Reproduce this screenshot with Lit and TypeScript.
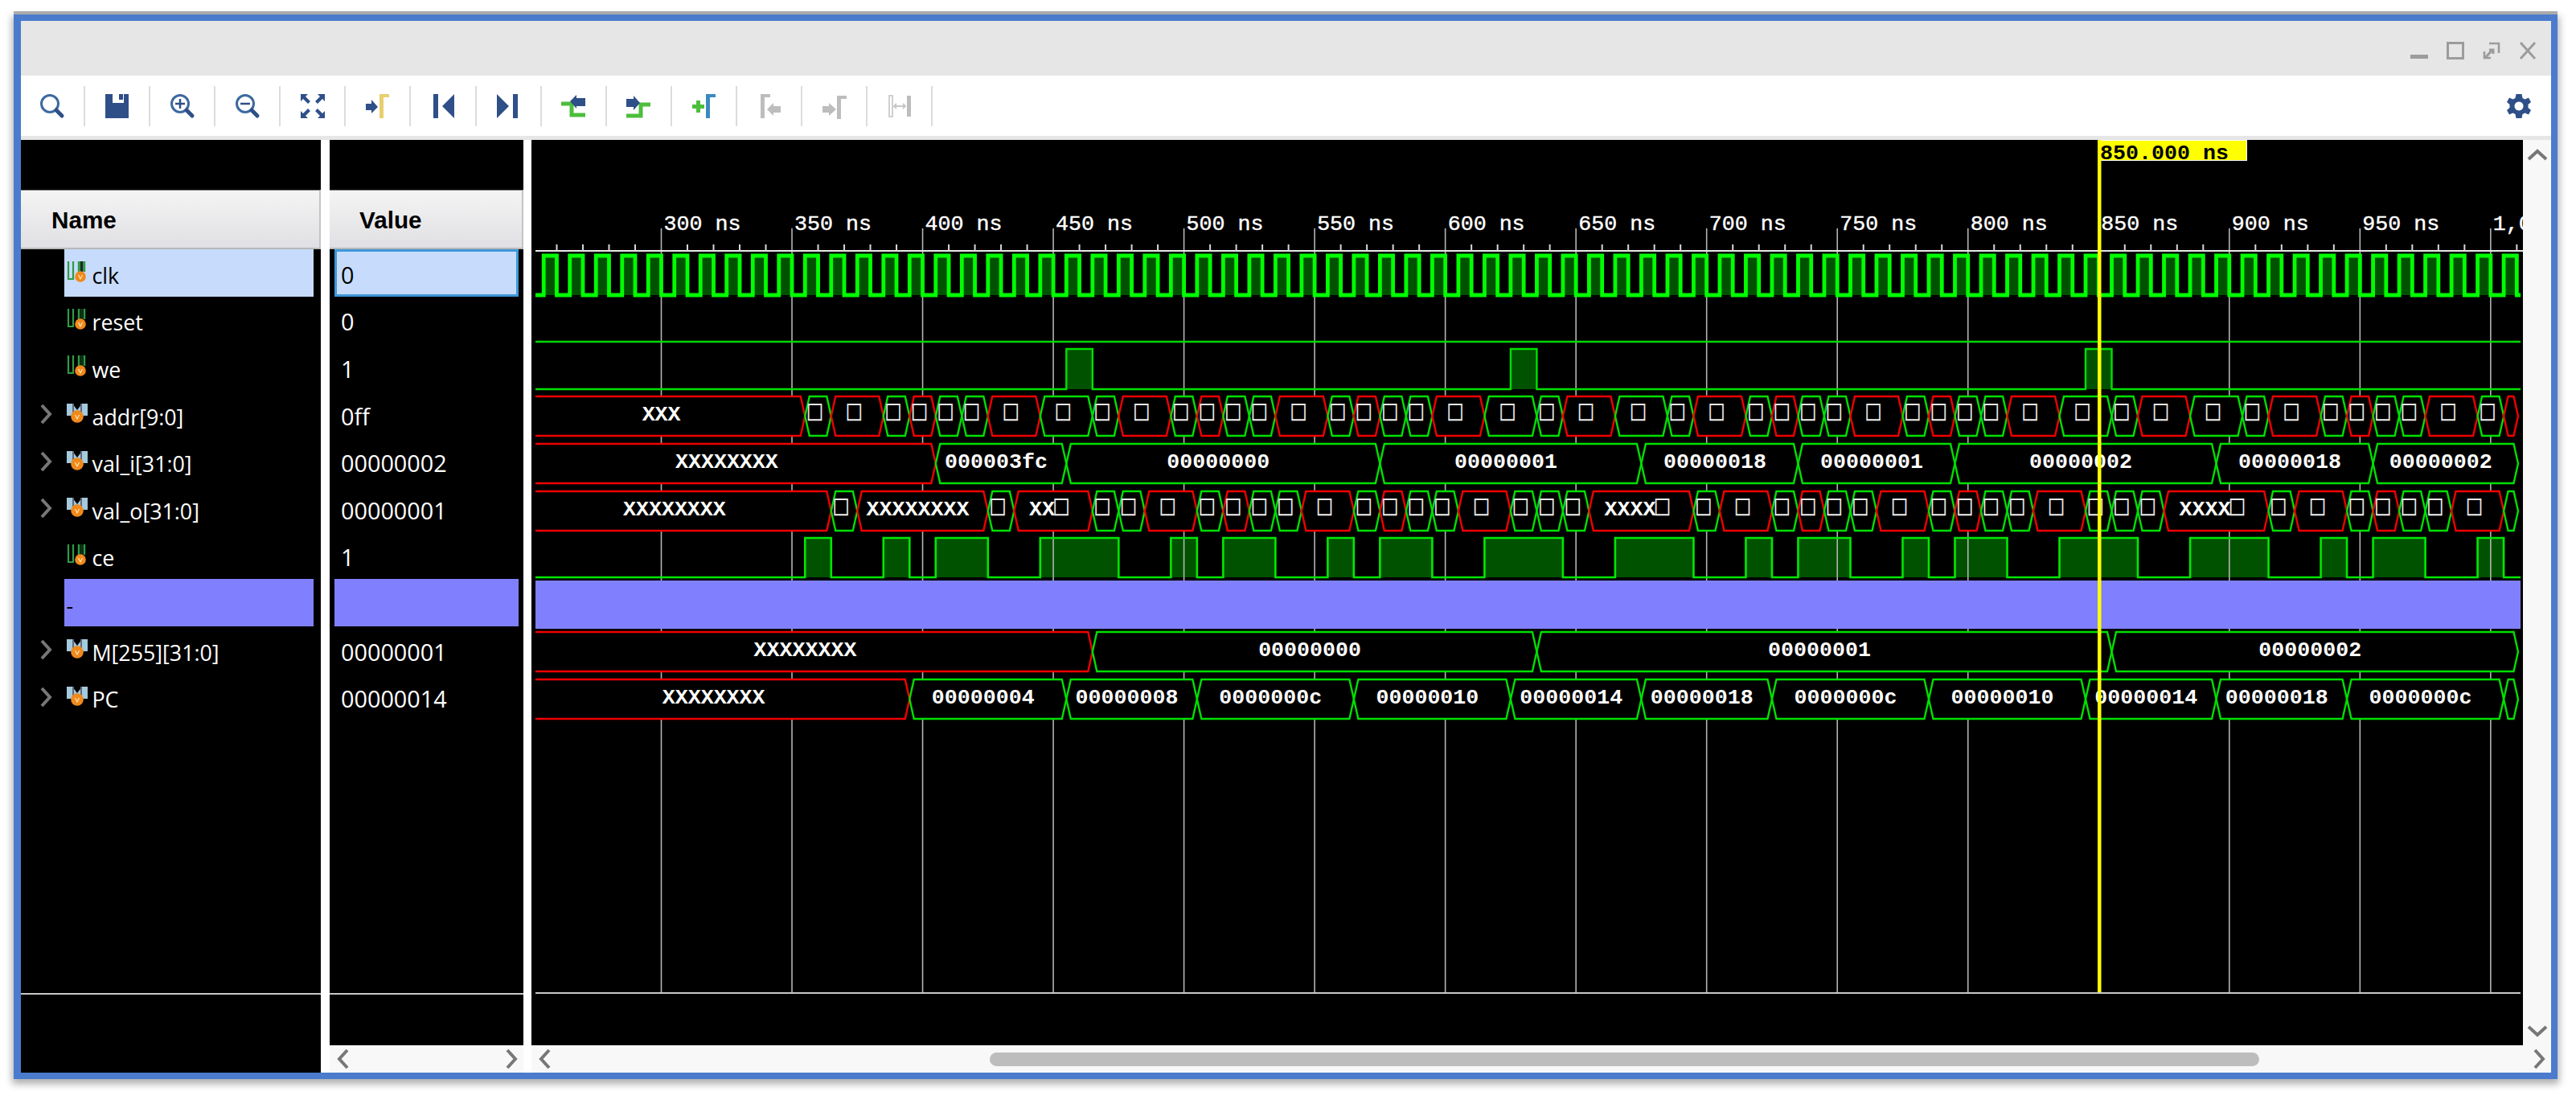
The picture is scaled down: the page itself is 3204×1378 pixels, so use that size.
import { LitElement, html, css, svg } from 'lit';
import { customElement } from 'lit/decorators.js';

const NAVY = '#2f4f88';
const GREY = '#bdbdbd';
const PX_NS = 3.2505;
const X0 = 666;
const XEND = 3132;
const TOFU = '\u25A1';
const CHAR_W = 16;

const tx = (ns: number) => 822.5 + (ns - 300) * PX_NS;

interface Seg { t: number; bad: boolean; label: string }

// "355g" = green segment from 355ns, "375r:XXXXXXXX" = red one with a label
const parse = (s: string): Seg[] =>
  s.split(' ').map((tok) => {
    const [head, label] = tok.split(':');
    return {
      t: parseInt(head),
      bad: head.endsWith('r'),
      label: label === undefined ? TOFU : label.replace(/#/g, TOFU),
    };
  });

const ADDR = parse('250r:XXX 355g 365r 385g 395r 405g 415g 425r 445g 465g 475r 495g 505r 515g 525g 535r 555g 565r 575g 585g 595r 615g 635g 645r 665g 685g 695r 715g 725r 735g 745g 755r 775g 785r 795g 805g 815r 835g 855g 865r 885g 905g 915r 935g 945r 955g 965g 975r 995g 1005r:');
const VAL_I = parse('250r:XXXXXXXX 405g:000003fc 455g:00000000 575g:00000001 675g:00000018 735g:00000001 795g:00000002 895g:00000018 955g:00000002');
const VAL_O = parse('250r:XXXXXXXX 365g 375r:XXXXXXXX 425g 435r:XX# 465g 475g 485r 505g 515r 525g 535g 545r 565g 575r 585g 595g 605r 625g 635g 645g 655r:XXXX# 695g 705r 725g 735r 745g 755g 765r 785g 795r 805g 815g 825r 845g 855g 865g 875r:XXXX# 915g 925r 945g 955r 965g 975g 985r 1005g:');
const MEM = parse('250r:XXXXXXXX 465g:00000000 635g:00000001 855g:00000002');
const PC = parse('250r:XXXXXXXX 395g:00000004 455g:00000008 505g:0000000c 565g:00000010 625g:00000014 675g:00000018 725g:0000000c 785g:00000010 845g:00000014 895g:00000018 945g:0000000c 1005g:');

const WE: [number, number][] = [[455, 465], [625, 635], [845, 855]];
const CE: [number, number][] = [
  [355, 365], [385, 395], [405, 425], [445, 475], [495, 505], [515, 535], [555, 565], [575, 595],
  [615, 645], [665, 695], [715, 725], [735, 755], [775, 785], [795, 815], [835, 865], [885, 915],
  [935, 945], [955, 975], [995, 1005],
];
const CLK: [number, number][] = Array.from({ length: 76 }, (_, i) => [255 + i * 10, 260 + i * 10] as [number, number]);

const ROWS = [
  { name: 'clk', value: '0', bus: false, selected: true },
  { name: 'reset', value: '0', bus: false },
  { name: 'we', value: '1', bus: false },
  { name: 'addr[9:0]', value: '0ff', bus: true },
  { name: 'val_i[31:0]', value: '00000002', bus: true },
  { name: 'val_o[31:0]', value: '00000001', bus: true },
  { name: 'ce', value: '1', bus: false },
  { name: '-', value: '', bus: false, divider: true },
  { name: 'M[255][31:0]', value: '00000001', bus: true },
  { name: 'PC', value: '00000014', bus: true },
];

const wrap = (body: unknown, w = 32, h = 32) =>
  html`<svg width=${w} height=${h} viewBox="0 0 ${w} ${h}">${body}</svg>`;

const lens = (extra: unknown = '') => svg`
  <circle cx="13" cy="13" r="10.5" fill="none" stroke="#3d6aa0" stroke-width="3"/>
  <path d="M21 21 L28 28" stroke=${NAVY} stroke-width="5" stroke-linecap="round"/>
  ${extra}`;

const marker = (x: number, y: number, c: string) =>
  svg`<path d="M${x} ${y + 30} V${y} H${x + 12} V${y + 4} H${x + 5} V${y + 30} Z" fill=${c}/>`;

const TOOLS = [
  lens(),
  svg`<path d="M1 1 H10 V12 H24 V1 H30 V31 H1 Z" fill=${NAVY}/><path d="M18 1 H23 V8 H18 Z" fill=${NAVY}/>`,
  lens(svg`<path d="M13 7 V19 M7 13 H19" stroke=${NAVY} stroke-width="2.5"/>`),
  lens(svg`<path d="M7 13 H19" stroke=${NAVY} stroke-width="2.5"/>`),
  svg`<g fill=${NAVY}>
    <path d="M1 1 H10 L7 4 L13 10 L10 13 L4 7 L1 10 Z"/>
    <path d="M31 1 H22 L25 4 L19 10 L22 13 L28 7 L31 10 Z"/>
    <path d="M1 31 H10 L7 28 L13 22 L10 19 L4 25 L1 22 Z"/>
    <path d="M31 31 H22 L25 28 L19 22 L22 19 L28 25 L31 22 Z"/></g>`,
  svg`<path d="M1 13 H8 V8 L16 17 L8 25 V21 H1 Z" fill=${NAVY}/>${marker(18, 1, '#e8cf6e')}`,
  svg`<path d="M4 1 H10 V31 H4 Z M30 1 V31 L15 16 Z" fill=${NAVY}/>`,
  svg`<path d="M28 1 H22 V31 H28 Z M2 1 V31 L17 16 Z" fill=${NAVY}/>`,
  svg`<path d="M1 13 H14 V27 H31" fill="none" stroke="#4dbe3c" stroke-width="5"/>
    <path d="M12 10 L20 2 V6 H31 V16 H20 V19 Z" fill=${NAVY}/>`,
  svg`<path d="M31 14 H19 V28 H1" fill="none" stroke="#4dbe3c" stroke-width="5"/>
    <path d="M18 12 L10 3 V7 H1 V17 H10 V21 Z" fill=${NAVY}/>`,
  svg`<path d="M7 9 H12 V14 H17 V19 H12 V24 H7 V19 H2 V14 H7 Z" fill="#4dbe3c"/>${marker(19, 1, '#3a8ac0')}`,
  svg`${marker(6, 1, GREY)}<path d="M14 20 L22 12 V16 H31 V24 H22 V28 Z" fill=${GREY}/>`,
  svg`<path d="M1 16 H9 V12 L18 20 L9 28 V24 H1 Z" fill=${GREY}/>${marker(19, 3, GREY)}`,
  svg`<rect x="3" y="3" width="4" height="26" fill="none" stroke="#d0d0d0" stroke-width="2"/>
    <rect x="25" y="3" width="5" height="26" fill=${GREY}/>
    <path d="M9 16 H23 M12 13 L9 16 L12 19 M20 13 L23 16 L20 19" fill="none" stroke="#c8c8c8" stroke-width="2"/>`,
];

const GEAR = svg`<path fill-rule="evenodd" fill=${NAVY} d="M12.5 1 H19.5 L20.5 6 L23.5 7.5 L28 5.5 L31 11 L27.5 14 V18 L31 21 L28 26.5 L23.5 24.5 L20.5 26 L19.5 31 H12.5 L11.5 26 L8.5 24.5 L4 26.5 L1 21 L4.5 18 V14 L1 11 L4 5.5 L8.5 7.5 L11.5 6 Z M16 10.5 A5.5 5.5 0 1 0 16.01 10.5 Z"/>`;

const chevron = (d: 'l' | 'r') => html`<svg class="chev" width="16" height="26" viewBox="0 0 16 26">
  <path d=${d === 'l' ? 'M13 2 L3 13 L13 24' : 'M3 2 L13 13 L3 24'} fill="none" stroke="#777" stroke-width="4"/></svg>`;

const vChevron = (up: boolean) => html`<svg width="26" height="15" viewBox="0 0 26 15">
  <path d=${up ? 'M2 13 L13 3 L24 13' : 'M2 2 L13 12 L24 2'} fill="none" stroke="#777" stroke-width="4"/></svg>`;

const dot = (cx: number, cy: number, r: number) => svg`
  <circle cx=${cx} cy=${cy} r=${r} fill="#f0891c"/>
  <path d="M${cx - 2.5} ${cy - 2} L${cx} ${cy + 3} L${cx + 2.5} ${cy - 2}" fill="none" stroke="#ffe3b0" stroke-width="1.2"/>`;

const bitIcon = html`<svg class="ico" width="26" height="26" viewBox="0 0 26 26">
  <path d="M2 0 V22 H9" fill="none" stroke="#2f9a44" stroke-width="2.2"/>
  <path d="M8 0 V22" stroke="#2f9a44" stroke-width="2.2"/>
  <path d="M15 0 V13 M22 0 V13" stroke="#2f9a44" stroke-width="2.4"/>
  <path d="M18.5 0 V13" stroke="#0c3314" stroke-width="4"/>
  ${dot(17, 19, 6.8)}</svg>`;

const busIcon = html`<svg class="ico" width="26" height="26" viewBox="0 0 26 26">
  <path d="M0 1 H7 L13 9 L19 1 H26 V16 H0 Z" fill="#a3cade"/>
  <path d="M8 1 L8 14 M18 1 L18 14" stroke="#667" stroke-width="2"/>
  ${dot(13, 17, 7.8)}</svg>`;

@customElement('app-root')
export class AppRoot extends LitElement {
  static styles = css`
    :host {
      display: block;
      width: 3204px;
      height: 1378px;
      background: #fff;
      overflow: hidden;
      font-family: 'Open Sans', 'Noto Sans', sans-serif;
    }
    .window {
      box-sizing: border-box;
      margin: 18px 0 0 17px;
      width: 3164px;
      height: 1324px;
      border: solid #4a7bcd;
      border-width: 8px 8px 8px 9px;
      display: flex;
      flex-direction: column;
      background: #fff;
      box-shadow: 0 -4px 0 #ababab, 0 4px 9px 2px rgba(0, 0, 0, 0.32);
    }
    .title {
      height: 68px;
      background: #e6e6e6;
      display: flex;
      justify-content: flex-end;
      align-items: flex-start;
      gap: 23px;
      padding: 26px 18px 0 0;
      box-sizing: border-box;
    }
    .toolbar {
      height: 75px;
      display: flex;
      align-items: center;
      background: #fff;
      border-bottom: 5px solid #e6e6e6;
      box-sizing: content-box;
    }
    .tool {
      width: 79.1px;
      display: flex;
      justify-content: center;
    }
    .tool:first-child { width: 78px; }
    .tool svg { display: block; }
    .sep {
      width: 2px;
      height: 50px;
      background: #dcdcdc;
    }
    .gear { margin-left: auto; margin-right: 24px; display: flex; }
    .panes {
      flex: 1;
      min-height: 0;
      display: flex;
      gap: 10px;
    }
    .col {
      display: flex;
      flex-direction: column;
      background: #000;
    }
    .names { width: 373px; margin-right: 1px; }
    .values { width: 241px; background: #fff; }
    .gap-top { height: 62px; background: #000; flex: none; }
    .head {
      height: 74px;
      flex: none;
      box-sizing: border-box;
      background: linear-gradient(#f4f4f4, #e0e0e4);
      border-right: 2px solid #c4c4c4;
      border-bottom: 2px solid #b8b8b8;
      border-top: 1px solid #777;
      color: #000;
      font: bold 29.7px 'Liberation Sans', Arial, sans-serif;
      display: flex;
      align-items: center;
      padding-top: 3px;
    }
    .names .head { padding-left: 38px; }
    .values .head { padding-left: 37px; }
    .body {
      flex: 1;
      min-height: 0;
      background: #000;
      display: flex;
      flex-direction: column;
    }
    .row {
      height: 58.6px;
      flex: none;
      display: flex;
      color: #fff;
      font-size: 26.8px;
    }
    .twist {
      width: 53.5px;
      flex: none;
      display: flex;
      align-items: center;
      justify-content: flex-end;
      padding-right: 15px;
      box-sizing: border-box;
    }
    .cell {
      flex: 1;
      margin-right: 9px;
      display: flex;
      align-items: center;
      gap: 6px;
      padding: 6px 0 0 3px;
      white-space: nowrap;
      box-sizing: border-box;
    }
    .ico { flex: none; margin-top: -8px; }
    .cell.sel { background: #c7dcfc; color: #000; }
    .cell.div { background: #8080ff; color: #000; padding-left: 3px; }
    .vrow { font-size: 28.8px; }
    .vrow .vcell {
      flex: 1;
      margin: 0 6px;
      display: flex;
      align-items: center;
      padding: 4px 0 0 8px;
      box-sizing: border-box;
    }
    .vcell.sel {
      background: #c7dcfc;
      color: #000;
      border: 3px solid #3f97d9;
      padding-left: 5px;
    }
    .vcell.div { background: #8080ff; }
    .fill { flex: 1; }
    .rule { height: 2px; flex: none; background: #c8c8c8; }
    .foot { height: 97px; flex: none; background: #000; }
    .foot.short { height: 63px; }
    .hbar {
      height: 34px;
      flex: none;
      background: #f8f8f8;
      display: flex;
      align-items: center;
      padding: 0 7px 0 9px;
      box-sizing: border-box;
    }
    .values .hbar { justify-content: space-between; }
    .chev { flex: none; display: block; }
    .thumb {
      margin-left: 545px;
      width: 1579px;
      height: 17px;
      border-radius: 9px;
      background: #bdbdbd;
    }
    .hbar .right { margin-left: auto; }
    .wavecol { flex: 1; min-width: 0; }
    .waverow { flex: 1; min-height: 0; display: flex; }
    .waverow > svg { display: block; background: #000; flex: none; }
    .vbar {
      flex: 1;
      background: #f8f8f8;
      display: flex;
      flex-direction: column;
      align-items: center;
      justify-content: space-between;
      padding: 11px 0 10px;
      box-sizing: border-box;
    }
    .tick {
      font: 26.67px 'Liberation Mono', 'DejaVu Sans Mono', monospace;
      fill: #fff;
      stroke: #fff;
      stroke-width: 0.4px;
    }
    .cur { font: bold 26.67px 'Liberation Mono', 'DejaVu Sans Mono', monospace; fill: #000; }
    .bus { font: bold 26.67px 'Liberation Mono', 'DejaVu Sans Mono', monospace; fill: #fff; }
    .tofu {
      font: 29px 'DejaVu Sans Mono', 'Liberation Mono', monospace;
      fill: #e8e8e8;
      text-anchor: middle;
    }
  `;

  // labels are left-anchored runs, missing-glyph boxes get their own stretched text
  private busLabel(label: string, cx: number, base: number) {
    if (!label) return '';
    const start = cx - (label.length * CHAR_W) / 2;
    const plain = label.replaceAll(TOFU, '');
    const boxes = [...label].map((c, i) => (c === TOFU ? start + i * CHAR_W + CHAR_W / 2 : -1)).filter((x) => x >= 0);
    return svg`
      ${plain ? svg`<text class="bus" x=${start} y=${base}>${plain}</text>` : ''}
      ${boxes.map((x) => svg`<text class="tofu" transform="translate(${x} ${base - 1.5}) scale(1 1.25)">${TOFU}</text>`)}`;
  }

  private busRow(segs: Seg[], top: number) {
    const bot = top + 49;
    const mid = top + 24.5;
    const hw = 5.5;
    return segs.map((s, i) => {
      const first = i === 0;
      const last = i === segs.length - 1;
      const a = first ? X0 : tx(s.t);
      const b = last ? XEND : tx(segs[i + 1].t);
      const d = first
        ? `M${a} ${top} H${b - hw} L${b} ${mid} L${b - hw} ${bot} H${a}`
        : `M${a} ${mid} L${a + hw} ${top} H${b - hw} L${b} ${mid} L${b - hw} ${bot} H${a + hw} Z`;
      const off = first ? -11 : s.label === TOFU ? -4 : -6;
      return svg`
        <path d=${d} fill="none" stroke=${s.bad ? '#f00000' : '#00e000'} stroke-width="2.4"/>
        ${this.busLabel(s.label, (a + b) / 2 + off, top + 30)}`;
    });
  }

  private pulses(list: [number, number][], hi: number, lo: number, width: number, color: string) {
    let d = `M${X0} ${lo}`;
    for (const [a, b] of list) {
      d += ` H${tx(a)} V${hi} H${tx(b)} V${lo}`;
    }
    d += ` H${Math.min(XEND + 3, 3135)}`;
    return svg`<path d=${d} fill="none" stroke=${color} stroke-width=${width}/>`;
  }

  private pulseFill(list: [number, number][], hi: number, lo: number) {
    return list.map(([a, b]) =>
      svg`<rect x=${tx(a)} y=${hi} width=${tx(b) - tx(a)} height=${lo - hi} fill="#005200"/>`);
  }

  private waves() {
    const majors = Array.from({ length: 15 }, (_, i) => 300 + i * 50);
    const minors = Array.from({ length: 76 }, (_, i) => 260 + i * 10).filter((t) => t % 50 !== 0 && tx(t) < 3138);
    const label = (t: number) => (t === 1000 ? '1,000 ns' : `${t} ns`);
    return html`<svg width="2477" height="1125" viewBox="661 174 2477 1125">
      ${this.pulseFill(CLK.filter(([a]) => tx(a) < 3132), 318, 367)}
      ${this.pulseFill(WE, 434, 484)}
      ${this.pulseFill(CE, 669, 718)}
      ${majors.map((t) => svg`<path d="M${tx(t)} 284 V1234" stroke="#b4b4b4" stroke-width="1.6"/>`)}
      <path d="M666 312 H3138" stroke="#e8e8e8" stroke-width="2"/>
      ${minors.map((t) => svg`<path d="M${tx(t)} 304 V312" stroke="#d8d8d8" stroke-width="2"/>`)}
      ${majors.map((t) => svg`<text class="tick" x=${tx(t) + 3} y="286">${label(t)}</text>`)}
      ${[493, 552, 611, 786, 845].map((y) => svg`<rect x="666" y=${y} width="2472" height="49" fill="#000"/>`)}
      <rect x="666" y="722" width="2469" height="60" fill="#8080ff"/>
      ${this.pulses(CLK.filter(([a]) => tx(a) < 3132), 318, 367, 4.8, '#00ff00')}
      ${this.pulses([], 425, 425, 2.4, '#00d800')}
      ${this.pulses(WE, 434, 484, 2.4, '#00e000')}
      ${this.pulses(CE, 669, 718, 2.6, '#00e800')}
      ${this.busRow(ADDR, 493)}
      ${this.busRow(VAL_I, 552)}
      ${this.busRow(VAL_O, 611)}
      ${this.busRow(MEM, 786)}
      ${this.busRow(PC, 845)}
      <path d="M666 1235 H3135" stroke="#c8c8c8" stroke-width="2"/>
      <rect x="2609.5" y="174.5" width="185" height="25" fill="#ffff00" stroke="#fff"/>
      <rect x="2609" y="174" width="4.5" height="1060" fill="#ffff00"/>
      <text class="cur" x="2612" y="198">850.000 ns</text>
    </svg>`;
  }

  render() {
    return html`
      <div class="window">
        <div class="title">
          ${wrap(svg`<rect x="0" y="16" width="22" height="5" fill="#9c9c9c"/>`, 22, 22)}
          ${wrap(svg`<rect x="1.5" y="1.5" width="19" height="19" fill="none" stroke="#9c9c9c" stroke-width="3"/>`, 22, 22)}
          ${wrap(svg`<path d="M8 2 H20 V14 M20 20 H20 M2 12 V20 H10" fill="none" stroke="#9c9c9c" stroke-width="2.6"/>
            <path d="M3 20 L12 10 M8 10 H13 V15" fill="none" stroke="#9c9c9c" stroke-width="3"/>`, 22, 22)}
          ${wrap(svg`<path d="M2 1 L20 21 M20 1 L2 21" fill="none" stroke="#9c9c9c" stroke-width="3"/>`, 22, 22)}
        </div>
        <div class="toolbar">
          ${TOOLS.map((t) => html`<div class="tool">${wrap(t)}</div><div class="sep"></div>`)}
          <div class="gear">${wrap(GEAR)}</div>
        </div>
        <div class="panes">
          <div class="col names">
            <div class="gap-top"></div>
            <div class="head">Name</div>
            <div class="body">
              ${ROWS.map((r) => html`
                <div class="row">
                  <div class="twist">${r.bus ? chevron('r') : ''}</div>
                  <div class="cell ${r.selected ? 'sel' : ''} ${r.divider ? 'div' : ''}">
                    ${r.divider ? '' : r.bus ? busIcon : bitIcon}<span>${r.name}</span>
                  </div>
                </div>`)}
              <div class="fill"></div>
              <div class="rule"></div>
              <div class="foot"></div>
            </div>
          </div>
          <div class="col values">
            <div class="gap-top"></div>
            <div class="head">Value</div>
            <div class="body">
              ${ROWS.map((r) => html`
                <div class="row vrow">
                  <div class="vcell ${r.selected ? 'sel' : ''} ${r.divider ? 'div' : ''}">${r.value}</div>
                </div>`)}
              <div class="fill"></div>
              <div class="rule"></div>
              <div class="foot short"></div>
            </div>
            <div class="hbar">${chevron('l')}${chevron('r')}</div>
          </div>
          <div class="col wavecol">
            <div class="waverow">
              ${this.waves()}
              <div class="vbar">${vChevron(true)}${vChevron(false)}</div>
            </div>
            <div class="hbar">${chevron('l')}<div class="thumb"></div><div class="right">${chevron('r')}</div></div>
          </div>
        </div>
      </div>
    `;
  }
}
